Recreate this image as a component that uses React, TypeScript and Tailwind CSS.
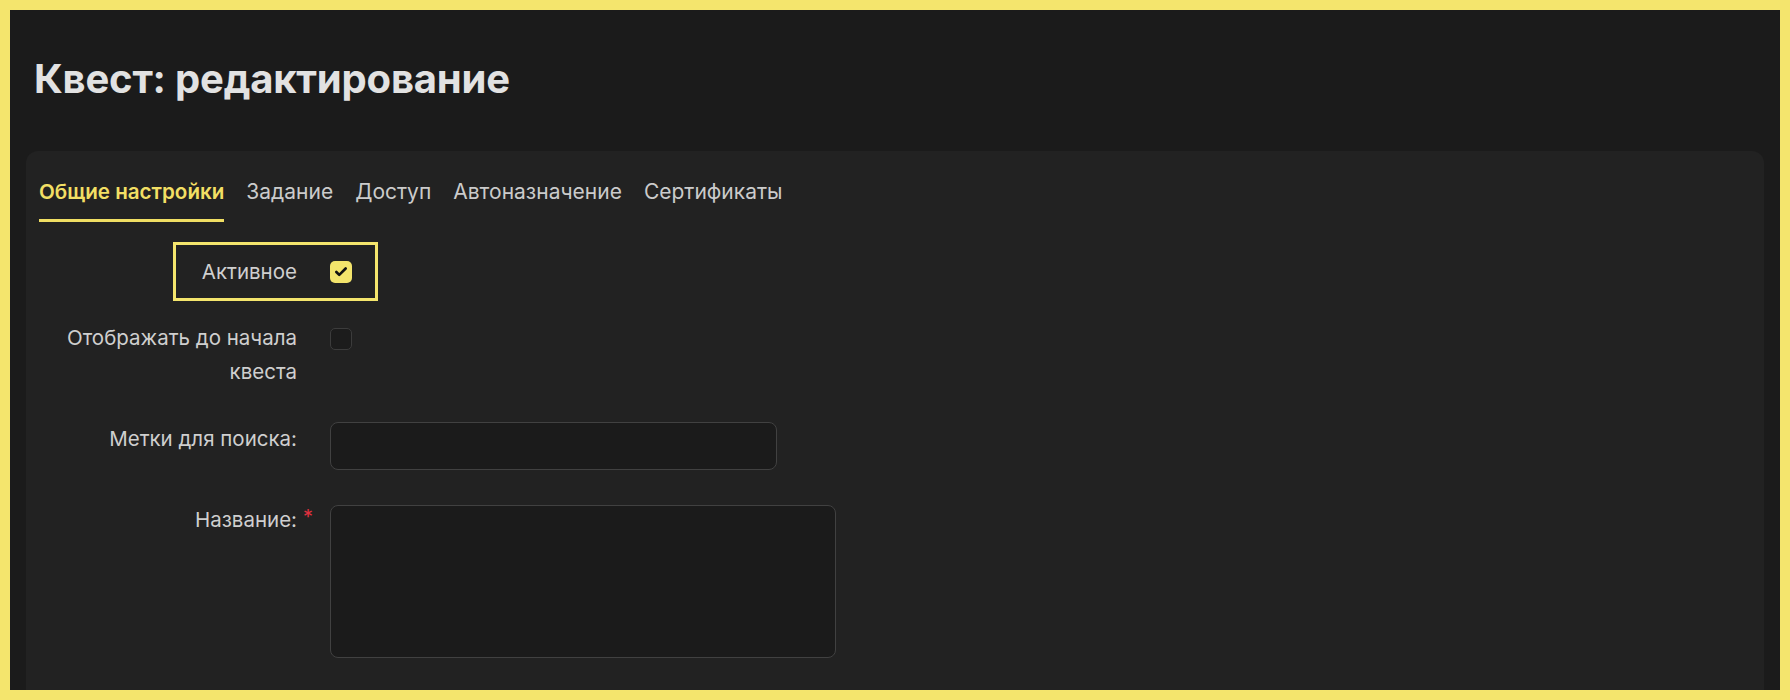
import { Check } from "lucide-react";

const tabs = ["Общие настройки", "Задание", "Доступ", "Автоназначение", "Сертификаты"];

function Checkbox({ checked }: { checked?: boolean }) {
  if (checked) {
    return (
      <span className="mt-[6px] flex h-[22px] w-[22px] items-center justify-center rounded-[5px] bg-[#f3e46c]">
        <Check size={14} strokeWidth={4.5} className="text-[#111111]" />
      </span>
    );
  }
  return (
    <span className="mt-[7px] block h-[22px] w-[22px] rounded-[5px] border border-[#3c3c3c] bg-[#1c1c1c]" />
  );
}

function Row({
  label,
  required,
  children,
  className = "",
}: {
  label: string;
  required?: boolean;
  children: React.ReactNode;
  className?: string;
}) {
  return (
    <div className={`relative flex items-start gap-[33px] ${className}`}>
      <label className="relative w-[258px] shrink-0 text-right text-[20.5px] leading-[34px] text-[#cfcfcf]">
        {label}
        {required && (
          <span className="absolute -right-[16px] top-[4px] text-[20px] leading-none text-[#e0313f]">*</span>
        )}
      </label>
      {children}
    </div>
  );
}

export default function App() {
  return (
    <div
      className="h-[700px] w-[1790px] bg-[#f4e56d] p-[10px]"
      style={{ fontFamily: "Inter, 'Noto Sans', sans-serif" }}
    >
      <main className="flex h-full flex-col overflow-hidden bg-[#1b1b1b]">
        <h1 className="px-[24px] pt-[45px] text-[40px] font-bold leading-[48px] tracking-[-0.2px] text-[#e2e2e2]">
          Квест: редактирование
        </h1>

        <section className="mx-[16px] mt-[48px] flex-1 rounded-t-[12px] bg-[#222222] px-[13px] pt-[27px]">
          <nav className="flex gap-[22px]">
            {tabs.map((t, i) => (
              <button
                key={t}
                className={
                  i === 0
                    ? "border-b-[3px] border-[#f0de63] pb-[13px] text-[20.6px] font-semibold leading-[28px] text-[#f2df64]"
                    : "border-b-[3px] border-transparent pb-[13px] text-[21px] leading-[28px] text-[#cbcbcb]"
                }
              >
                {t}
              </button>
            ))}
          </nav>

          <div className="mt-[33px] flex flex-col gap-[32px]">
            <Row label="Активное">
              <Checkbox checked />
              <span className="absolute left-[134px] top-[-13px] h-[59px] w-[205px] border-[3px] border-[#f4e56d]" />
            </Row>

            <Row label="Отображать до начала квеста">
              <Checkbox />
            </Row>

            <Row label="Метки для поиска:" className="mt-[1px]">
              <input
                type="text"
                className="h-[48px] w-[447px] rounded-[8px] border border-[#414141] bg-[#1b1b1b] px-3 text-[18px] text-[#dddddd] outline-none"
              />
            </Row>

            <Row label="Название:" required className="mt-[1px]">
              <textarea className="mt-[2px] h-[153px] w-[506px] resize-none rounded-[8px] border border-[#414141] bg-[#1b1b1b] px-3 py-2 text-[18px] text-[#dddddd] outline-none" />
            </Row>
          </div>
        </section>
      </main>
    </div>
  );
}
